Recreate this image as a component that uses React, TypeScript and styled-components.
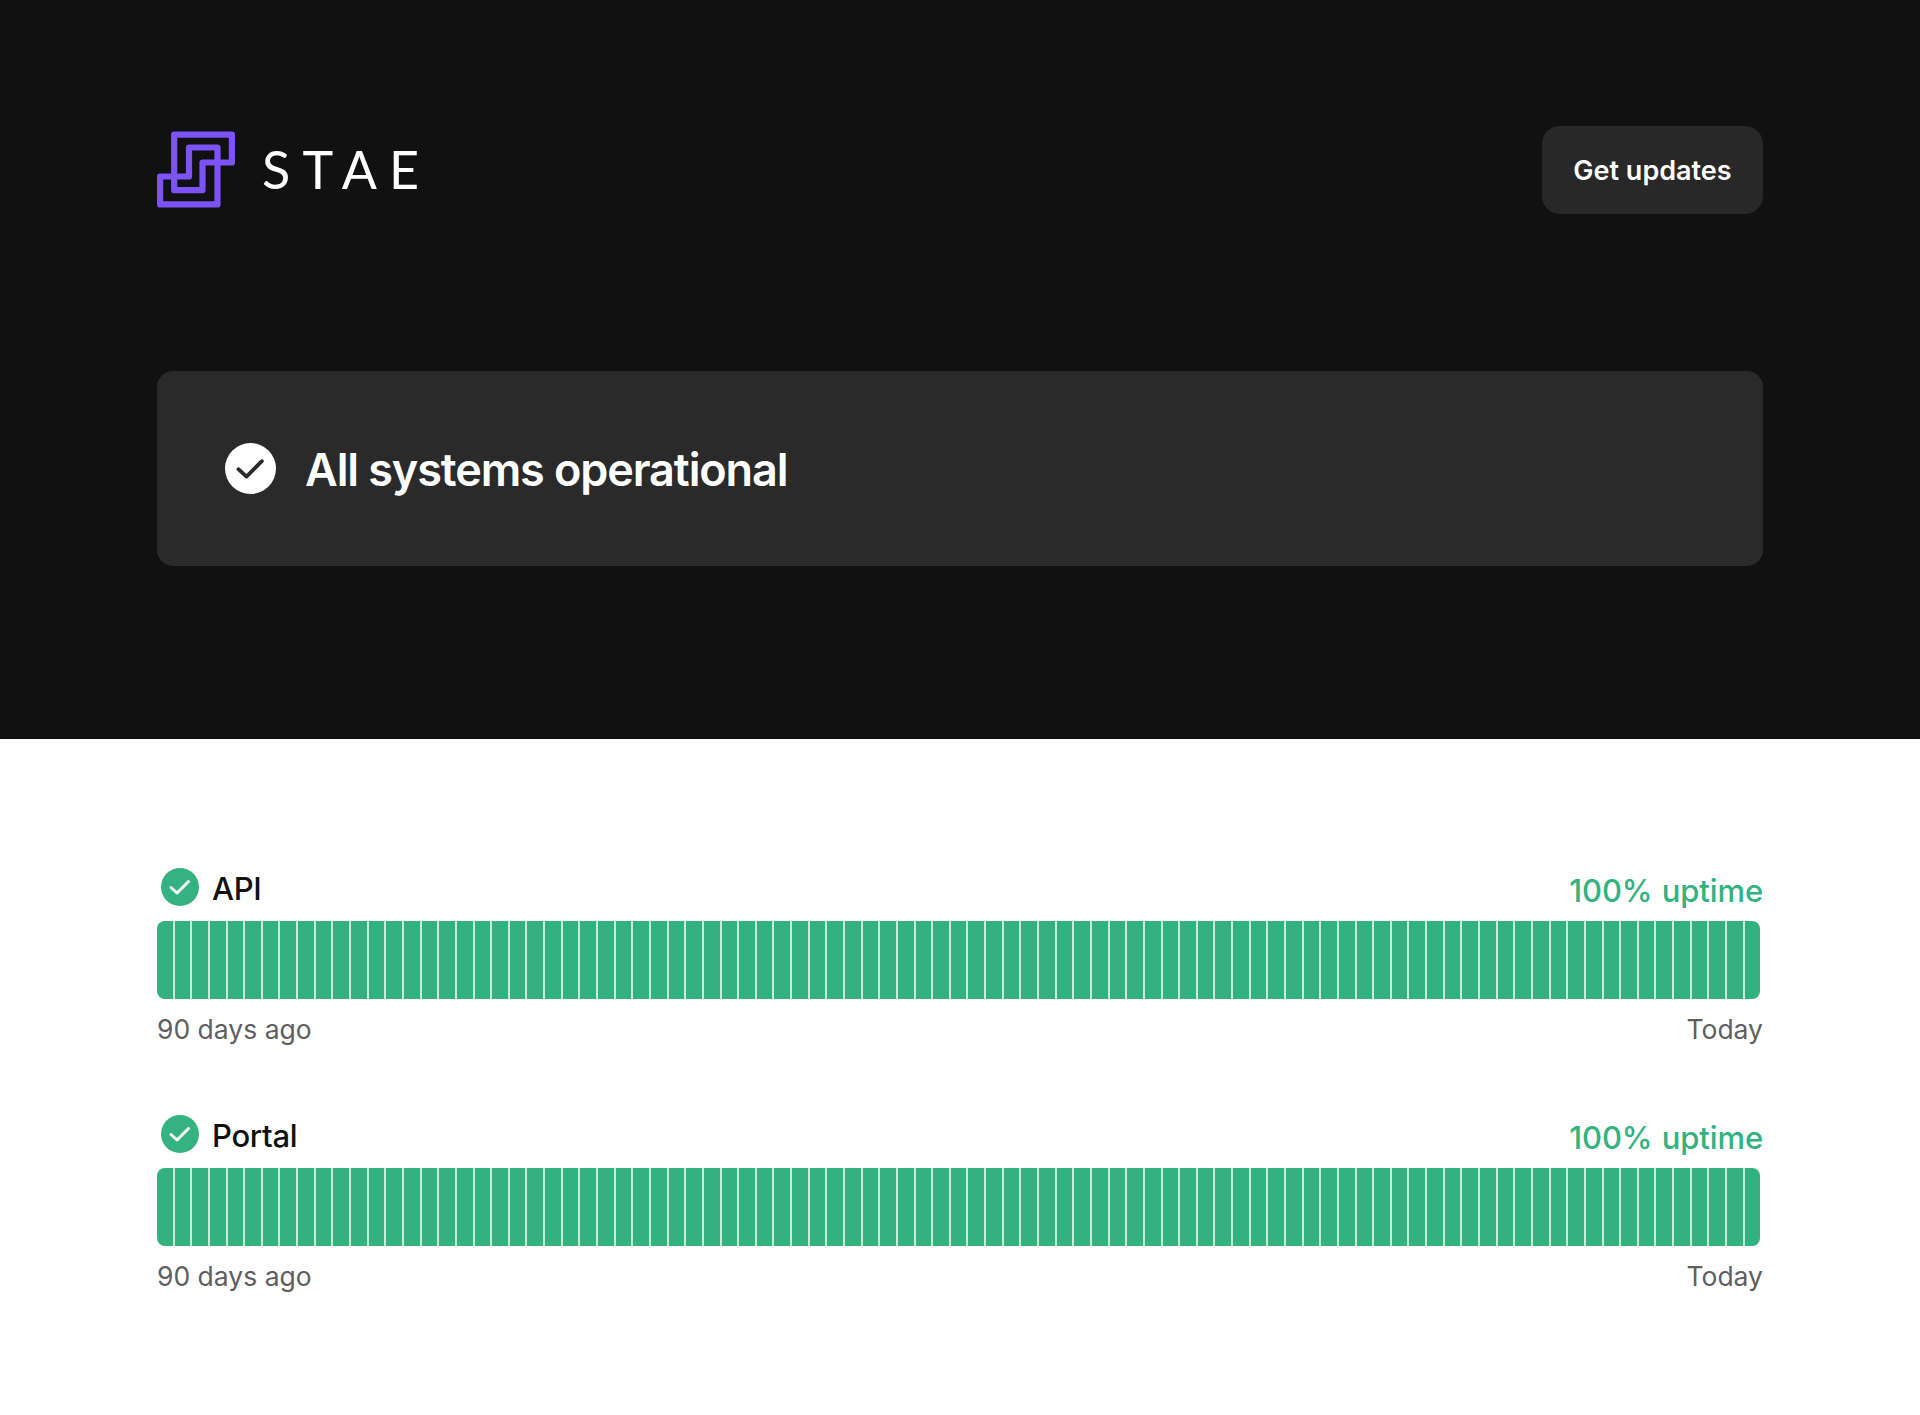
import React from "react";
import styled, { createGlobalStyle } from "styled-components";

const Global = createGlobalStyle`
  html, body { margin: 0; padding: 0; background: #fff; }
  body { font-family: Inter, "Liberation Sans", sans-serif; -webkit-font-smoothing: antialiased; }
`;

const Page = styled.div`
  width: 1920px;
  height: 1415px;
  display: flex;
  flex-direction: column;
`;

const Hero = styled.header`
  background: #111111;
  height: 739px;
  box-sizing: border-box;
  padding: 126px 157px 0;
  display: flex;
  flex-direction: column;
  gap: 157px;
`;

const TopBar = styled.div`
  display: flex;
  align-items: center;
  justify-content: space-between;
  height: 88px;
`;

const Brand = styled.div`
  display: flex;
  align-items: center;
  gap: 27px;
`;

const Wordmark = styled.span`
  font-family: Lato, sans-serif;
  font-weight: 400;
  font-size: 52px;
  line-height: 1;
  letter-spacing: 12.2px;
  color: #ffffff;
  margin-top: -3px;
`;

const UpdatesButton = styled.button`
  width: 221px;
  height: 88px;
  border: 0;
  border-radius: 18px;
  background: #282828;
  color: #ffffff;
  font-family: Inter, sans-serif;
  font-size: 27px;
  font-weight: 600;
  letter-spacing: 0;
`;

const StatusCard = styled.section`
  height: 195px;
  box-sizing: border-box;
  padding: 0 68px;
  border-radius: 16px;
  background: #2a2a2a;
  display: flex;
  align-items: center;
  gap: 29px;
`;

const StatusTitle = styled.h1`
  margin: 1px 0 0;
  font-size: 45px;
  line-height: 1;
  font-weight: 600;
  letter-spacing: -1.1px;
  color: #ffffff;
`;

const Services = styled.main`
  padding: 125px 157px 0;
  display: flex;
  flex-direction: column;
  gap: 52px;
`;

const Service = styled.article`
  display: flex;
  flex-direction: column;
`;

const ServiceHead = styled.div`
  height: 57px;
  display: flex;
  align-items: flex-start;
  justify-content: space-between;
`;

const ServiceName = styled.div`
  display: flex;
  align-items: center;
  gap: 13px;
  height: 38px;
  margin-top: 4px;
  padding-left: 4px;
  font-size: 31px;
  font-weight: 500;
  letter-spacing: -0.3px;
  color: #111111;
`;

const NameText = styled.span`
  padding-top: 2px;
`;

const Uptime = styled.span`
  font-size: 31px;
  line-height: 38px;
  margin-top: 8px;
  font-weight: 500;
  letter-spacing: -0.1px;
  word-spacing: 1px;
  color: #34b27f;
`;

const Bars = styled.div`
  display: flex;
  gap: 2px;
  width: 1603px;
  height: 78px;
  border-radius: 8px;
  overflow: hidden;
  background: #c9eadb;
`;

const Bar = styled.div`
  flex: 1 1 0;
  background: #33b17f;
`;

const Legend = styled.div`
  display: flex;
  justify-content: space-between;
  align-items: center;
  height: 60px;
  font-size: 26.5px;
  color: #5e5e5e;
`;

const CheckBadge: React.FC<{ size: number; bg: string; fg: string; stroke: number }> = ({ size, bg, fg, stroke }) => (
  <svg width={size} height={size} viewBox="0 0 38 38" aria-hidden="true">
    <circle cx="19" cy="19" r="19" fill={bg} />
    <path d="M10 19.5 L16 25 L27.5 13.5" fill="none" stroke={fg} strokeWidth={stroke} strokeLinecap="round" strokeLinejoin="round" />
  </svg>
);

const Logo = () => (
  <svg width="78" height="78" viewBox="0 0 78 78" aria-hidden="true" fill="none" stroke="#7c53f6" strokeWidth="6.2" strokeLinejoin="round">
    <path d="M17.2 45.5 V3.6 H74.9 V31.5 H60.5 V73.4 H3.1 V45.5 Z" />
    <path d="M17.2 45.5 V59.2 H45.5 V31.5 H60.5 V16.5 H32 V45.5 Z" />
  </svg>
);

const days = Array.from({ length: 91 }, (_, i) => i);
const services = ["API", "Portal"];

export default function App() {
  return (
    <Page>
      <Global />
      <Hero>
        <TopBar>
          <Brand>
            <Logo />
            <Wordmark>STAE</Wordmark>
          </Brand>
          <UpdatesButton>Get updates</UpdatesButton>
        </TopBar>
        <StatusCard>
          <CheckBadge size={51} bg="#ffffff" fg="#2a2a2a" stroke={2.8} />
          <StatusTitle>All systems operational</StatusTitle>
        </StatusCard>
      </Hero>
      <Services>
        {services.map((name) => (
          <Service key={name}>
            <ServiceHead>
              <ServiceName>
                <CheckBadge size={38} bg="#34b27f" fg="#ffffff" stroke={3} />
                <NameText>{name}</NameText>
              </ServiceName>
              <Uptime>100% uptime</Uptime>
            </ServiceHead>
            <Bars>
              {days.map((d) => (
                <Bar key={d} />
              ))}
            </Bars>
            <Legend>
              <span>90 days ago</span>
              <span>Today</span>
            </Legend>
          </Service>
        ))}
      </Services>
    </Page>
  );
}
